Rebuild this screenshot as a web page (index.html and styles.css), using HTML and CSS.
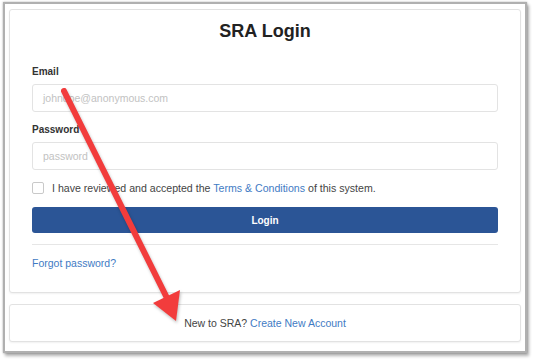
FILE: index.html
```html
<!DOCTYPE html>
<html lang="en">
<head>
<meta charset="utf-8">
<title>SRA Login</title>
<link rel="stylesheet" href="styles.css">
</head>
<body>
<div class="frame">
  <div class="card login">
    <h1 class="title">SRA Login</h1>
    <div class="group">
      <label class="label">Email</label>
      <div class="input"><span class="ph">johndoe@anonymous.com</span></div>
    </div>
    <div class="group">
      <label class="label">Password</label>
      <div class="input"><span class="ph">password</span></div>
    </div>
    <div class="check-row">
      <span class="checkbox"></span>
      <span class="check-text">I have reviewed and accepted the <a class="link">Terms &amp; Conditions</a> of this system.</span>
    </div>
    <div class="btn">Login</div>
    <div class="divider"></div>
    <a class="link forgot">Forgot password?</a>
  </div>
  <div class="card footer">
    <span>New to SRA? <a class="link">Create New Account</a></span>
  </div>
  <svg class="arrow" width="535" height="361" viewBox="0 0 535 361">
    <g class="arrow-g">
      <line x1="64" y1="91" x2="167" y2="298" stroke="#f23c3c" stroke-width="6" stroke-linecap="round"/>
      <polygon points="153,303 180,290 176,321" fill="#f23c3c"/>
    </g>
  </svg>
</div>
</body>
</html>
```

FILE: styles.css
```css
* { box-sizing: border-box; }
html, body { margin: 0; padding: 0; background: #fff; }
body {
  font-family: "Liberation Sans", Arial, sans-serif;
  color: #444;
  width: 535px;
  height: 361px;
  overflow: hidden;
}
.frame {
  position: relative;
  margin: 2px 0 0 3px;
  width: 524px;
  height: 351px;
  border: 2px solid #b0b0b0;
  box-shadow: 0 0 2px rgba(0,0,0,.3), 2px 3px 3px rgba(0,0,0,.3);
  padding: 5px 4px 0 4px;
  background: #fff;
  display: flex;
  flex-direction: column;
  gap: 11px;
}
.card {
  border: 1px solid #e2e2e2;
  border-radius: 3px;
  background: #fff;
  box-shadow: 0 1px 2px rgba(0,0,0,.06);
}
.login {
  padding: 10px 22px 22px 22px;
  display: flex;
  flex-direction: column;
}
.title {
  margin: 0 0 24px;
  font-size: 18px;
  line-height: 22px;
  font-weight: bold;
  color: #222;
  text-align: center;
}
.group {
  display: flex;
  flex-direction: column;
  margin-bottom: 12px;
}
.label {
  font-size: 10px;
  line-height: 12px;
  font-weight: bold;
  color: #333;
  margin-bottom: 6px;
}
.input {
  height: 28px;
  border: 1px solid #e3e3e3;
  border-radius: 3px;
  padding: 0 10px;
  display: flex;
  align-items: center;
  font-size: 10.5px;
}
.ph { color: #c2c2c2; }
.check-row {
  display: flex;
  align-items: center;
  gap: 8px;
  height: 12px;
  margin-bottom: 13px;
  font-size: 10.6px;
  color: #444;
}
.checkbox {
  width: 12px;
  height: 12px;
  border: 1px solid #c9c9c9;
  border-radius: 2px;
  flex: none;
}
.link { color: #3f7bc4; text-decoration: none; }
.btn {
  height: 26px;
  background: #2b5596;
  border-radius: 3px;
  color: #fff;
  font-weight: bold;
  font-size: 10px;
  display: flex;
  align-items: center;
  justify-content: center;
}
.divider {
  height: 1px;
  background: #e6e6e6;
  margin: 11px 0 12px;
}
.forgot {
  font-size: 10.5px;
  line-height: 13px;
}
.footer {
  height: 38px;
  display: flex;
  align-items: center;
  justify-content: center;
  font-size: 10.5px;
  color: #444;
}
.arrow {
  position: absolute;
  left: -5px;
  top: -4px;
  pointer-events: none;
}
.arrow-g {
  filter: drop-shadow(1px 2px 1.5px rgba(0,0,0,.25));
}
```
